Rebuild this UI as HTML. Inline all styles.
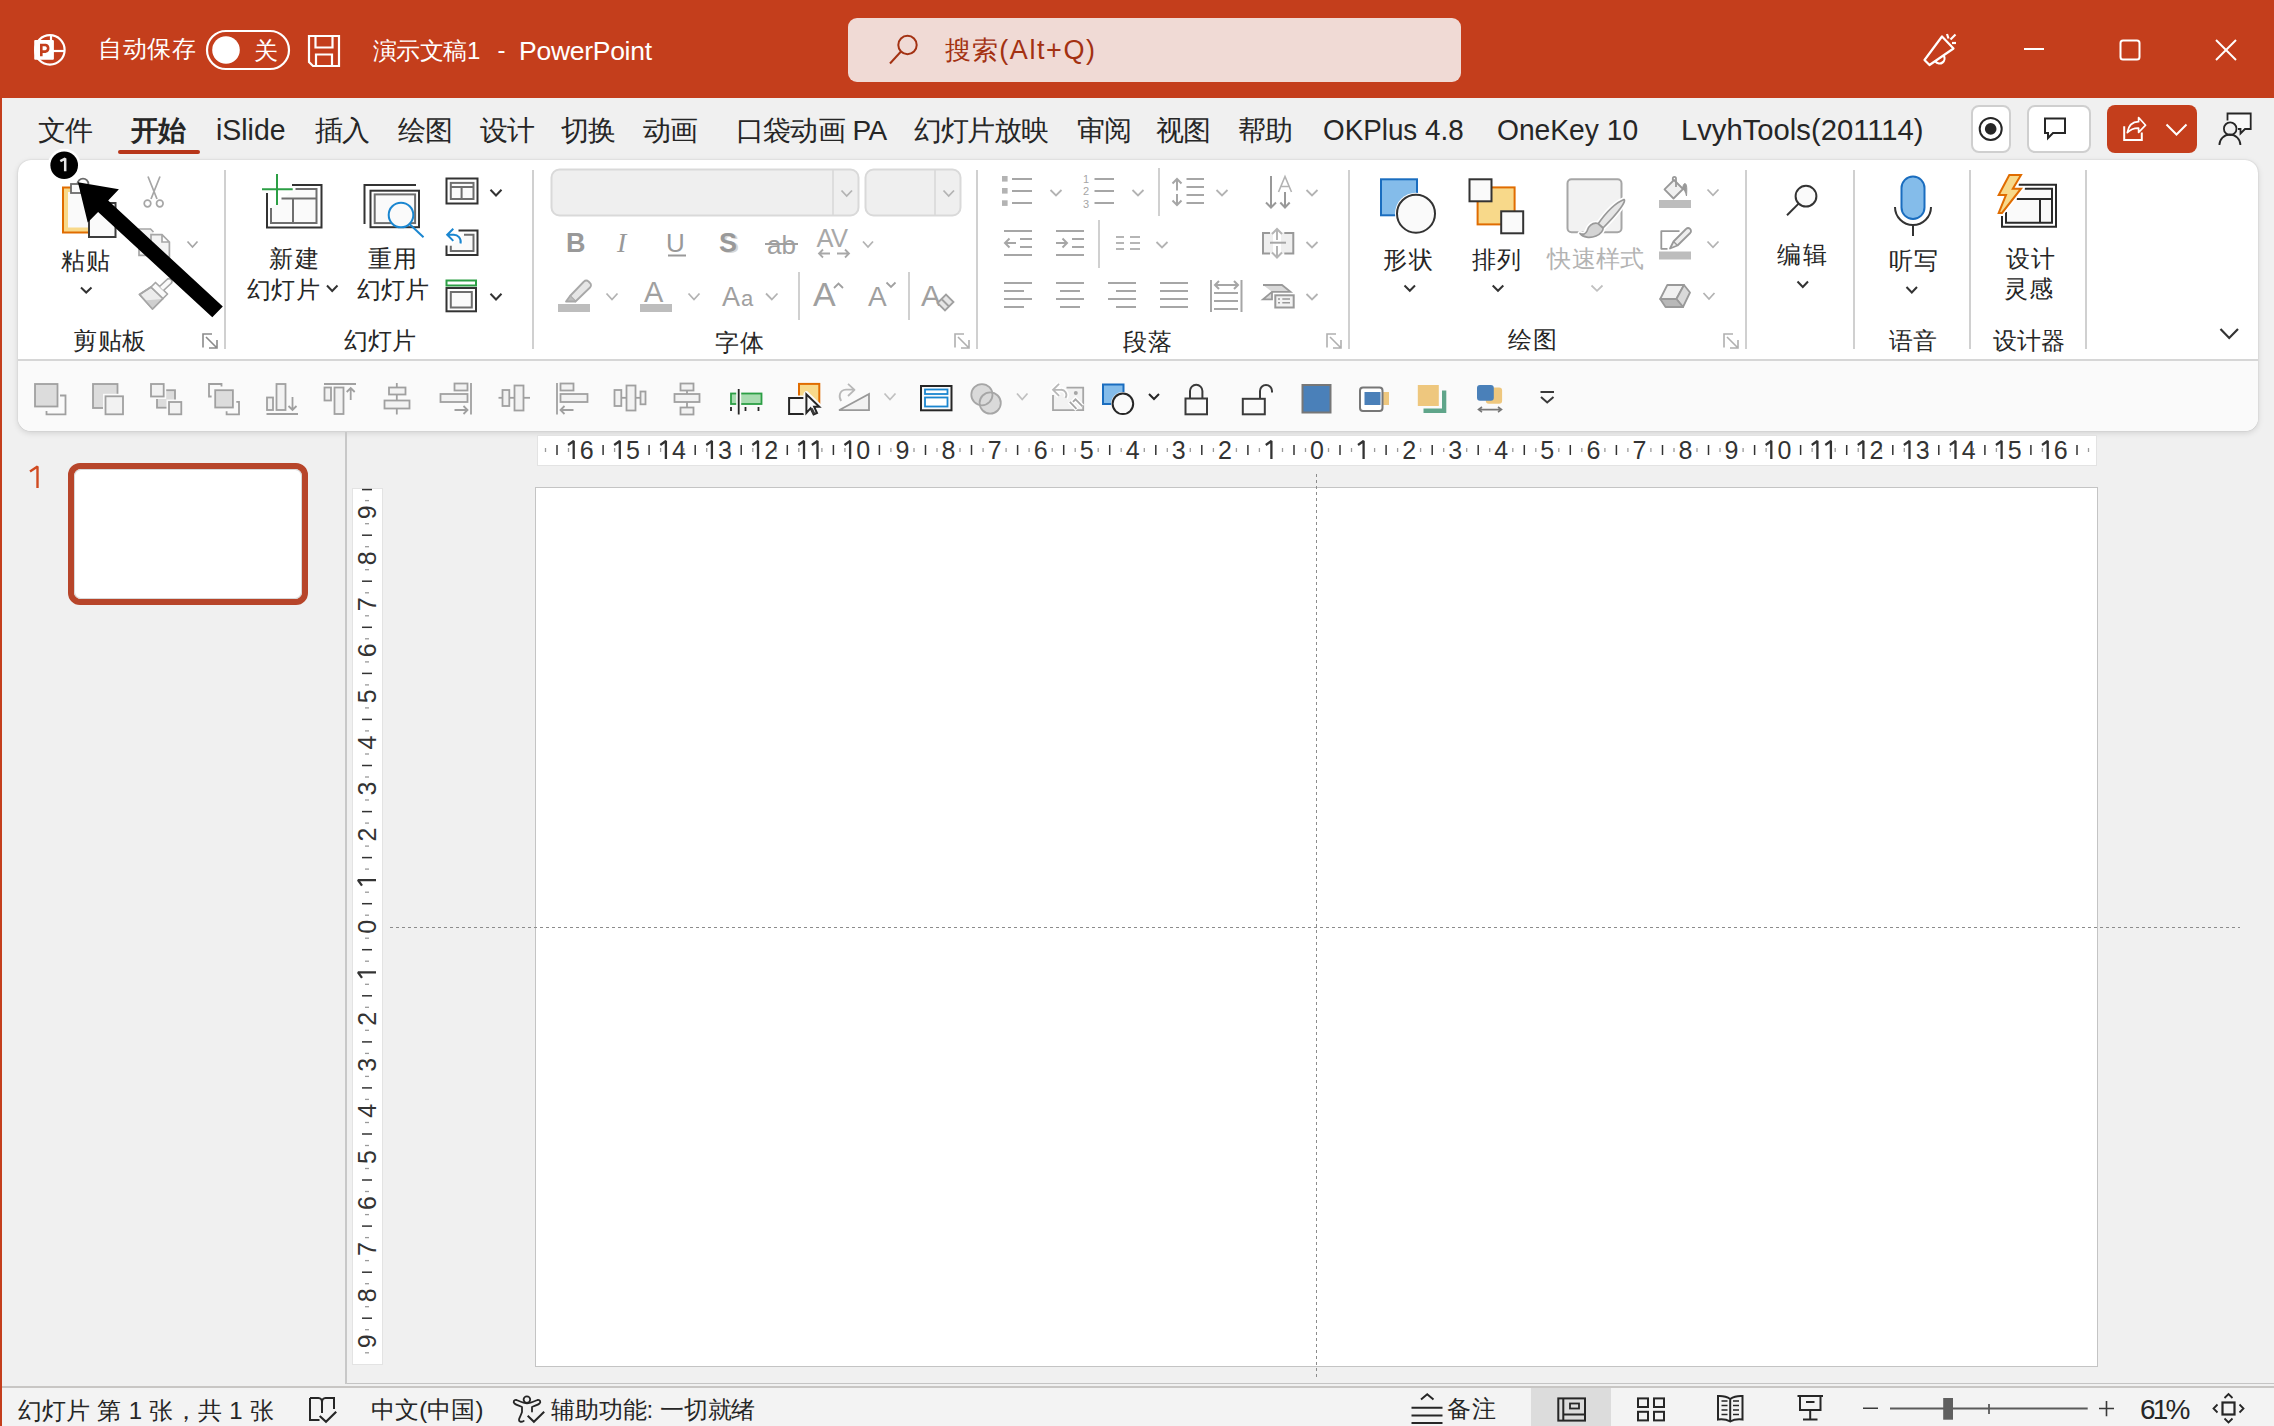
<!DOCTYPE html>
<html><head><meta charset="utf-8">
<style>
*{box-sizing:border-box;margin:0;padding:0}
html,body{width:2274px;height:1426px;overflow:hidden;background:#f0f0f0;font-family:"Liberation Sans",sans-serif;color:#262626}
.a{position:absolute}
svg{position:absolute;overflow:visible}
.t{position:absolute;white-space:nowrap;line-height:1}
#title{left:0;top:0;width:2274px;height:98px;background:#c43e1c}
#lb{left:0;top:98px;width:2px;height:1328px;background:#c43e1c}
#ribbon{left:18px;top:160px;width:2240px;height:270.5px;background:#fff;border-radius:13px;box-shadow:0 2px 6px rgba(0,0,0,.13),0 0 1.5px rgba(0,0,0,.18)}
#tb2{left:18px;top:359px;width:2240px;height:71.5px;background:#fafafa;border-top:2px solid #d6d6d6;border-radius:0 0 13px 13px}
.sep{position:absolute;width:2px;background:#d4d4d4}
.gl{position:absolute;font-size:24px;color:#262626;line-height:1}
.tab{position:absolute;top:117px;font-size:28px;line-height:1;color:#262626;letter-spacing:-1px}
</style></head><body>
<div id="title" class="a"></div>
<div id="lb" class="a"></div>
<!-- TITLE BAR CONTENT -->
<svg style="left:0;top:0" width="2274" height="98">
 <g fill="none" stroke="#fff" stroke-width="2.2">
  <circle cx="49.9" cy="49.9" r="14.7"/>
  <line x1="51" y1="35" x2="51" y2="40"/><line x1="53" y1="51" x2="65" y2="51"/>
 </g>
 <rect x="34.2" y="39.9" width="19.7" height="19.9" rx="1" fill="#fff"/>
 <path d="M41.3 56.2 V45 H45.6 A3.4 3.4 0 0 1 45.6 51.6 H41.3" fill="none" stroke="#c43e1c" stroke-width="2.6"/>
 <rect x="207" y="31" width="82" height="38" rx="19" fill="none" stroke="#fff" stroke-width="2.2"/>
 <circle cx="226" cy="50" r="13.8" fill="#fff"/>
 <g fill="none" stroke="#fff" stroke-width="2.2">
  <path d="M309 36 H339 V66 H313 L309 62 Z"/>
  <path d="M315.5 36 V47.5 H332.5 V36"/>
  <path d="M316 66 V54.5 H332 V66"/>
 </g>
 <rect x="848" y="18" width="613" height="64" rx="9" fill="#f0dad5"/>
 <g fill="none" stroke="#a33112" stroke-width="2">
  <circle cx="907.5" cy="45" r="9.2"/>
  <line x1="901" y1="51.5" x2="890" y2="63.5"/>
 </g>
 <g fill="none" stroke="#fff" stroke-width="2.2" stroke-linejoin="round">
  <path d="M1942 36.5 L1953.5 48.5 L1929.5 65 L1924.5 60 Z"/>
  <path d="M1935.5 61.5 A4.5 4.5 0 1 0 1943.5 55.5"/>
  <line x1="1947" y1="34" x2="1948.5" y2="38.5"/>
  <line x1="1950.5" y1="39.5" x2="1955.5" y2="34.5"/>
  <line x1="1952" y1="43" x2="1956" y2="43"/>
 </g>
 <g fill="none" stroke="#fff" stroke-width="2">
  <line x1="2024" y1="49" x2="2044" y2="49"/>
  <rect x="2120.5" y="40.5" width="19" height="19" rx="2.5"/>
  <line x1="2216" y1="40" x2="2236" y2="60"/><line x1="2236" y1="40" x2="2216" y2="60"/>
 </g>
</svg>



<!-- TABS -->
<div class="tab" id="tab0" style="left:38px;">文件</div>
<div class="tab" id="tab1" style="left:131px;font-weight:bold;">开始</div>
<div class="tab" id="tab2" style="left:216px;font-size:30px;top:115px;letter-spacing:0;transform-origin:0 0;transform:scaleX(0.948);">iSlide</div>
<div class="tab" id="tab3" style="left:315px;">插入</div>
<div class="tab" id="tab4" style="left:397.5px;">绘图</div>
<div class="tab" id="tab5" style="left:479.5px;">设计</div>
<div class="tab" id="tab6" style="left:561.4px;">切换</div>
<div class="tab" id="tab7" style="left:643.2px;">动画</div>
<div class="tab" id="tab8" style="left:735.7px;letter-spacing:-0.6px">口袋动画 PA</div>
<div class="tab" id="tab9" style="left:913.9px;letter-spacing:-1.2px">幻灯片放映</div>
<div class="tab" id="tab10" style="left:1076.5px;">审阅</div>
<div class="tab" id="tab11" style="left:1156.3px;">视图</div>
<div class="tab" id="tab12" style="left:1237.9px;">帮助</div>
<div class="tab" id="tab13" style="left:1322.9px;font-size:30px;top:115px;letter-spacing:0;transform-origin:0 0;transform:scaleX(0.927);">OKPlus 4.8</div>
<div class="tab" id="tab14" style="left:1497.4px;font-size:30px;top:115px;letter-spacing:0;transform-origin:0 0;transform:scaleX(0.94);">OneKey 10</div>
<div class="tab" id="tab15" style="left:1681px;font-size:30px;top:115px;letter-spacing:0;transform-origin:0 0;transform:scaleX(0.974);">LvyhTools(201114)</div>
<div class="a" style="left:118px;top:150px;width:82px;height:4px;border-radius:2px;background:#b7361a"></div>

<!-- TAB RIGHT BUTTONS -->
<svg style="left:0;top:0" width="2274" height="170">
 <rect x="1972" y="106" width="38" height="46" rx="7" fill="#fff" stroke="#cfcfcf" stroke-width="2"/>
 <circle cx="1990.7" cy="128.9" r="11" fill="none" stroke="#262626" stroke-width="2"/>
 <circle cx="1990.7" cy="128.9" r="5.8" fill="#262626"/>
 <rect x="2028" y="106" width="62" height="46" rx="7" fill="#fff" stroke="#cfcfcf" stroke-width="2"/>
 <path d="M2045 118.5 H2065 V133 H2053 L2048 138 V133 H2045 Z" fill="none" stroke="#262626" stroke-width="2" stroke-linejoin="miter"/>
 <rect x="2107" y="105" width="90" height="48" rx="8" fill="#c43e1c"/>
 <g fill="none" stroke="#fff" stroke-width="2">
  <path d="M2124.2 126.2 V140 H2141.8 V132.4"/>
  <path d="M2127.3 132.7 C2128.5 125 2133 121.8 2138.6 121.7 V117.5 L2145.6 125.2 L2138.6 132.4 V128.2 C2133 128 2130 130 2127.3 132.7 Z" stroke-width="1.7" stroke-linejoin="round"/>
  <path d="M2166.5 124.5 L2176.5 134.5 L2186.5 124.5"/>
 </g>
 <g fill="none" stroke="#262626" stroke-width="2">
  <path d="M2227.5 120.5 V113.5 H2250.7 V129 H2245 L2240.5 133.5 V129 H2238" fill="#fafafa" stroke-width="1.8"/>
  <circle cx="2230.2" cy="128.7" r="6.3" fill="#f0f0f0" stroke-width="1.8"/>
  <path d="M2219.4 145 A10.5 10.5 0 0 1 2240.4 145" stroke-width="1.8"/>
 </g>
</svg>
<!-- ribbon -->
<div id="ribbon" class="a"></div>
<div id="tb2" class="a"></div>


<!-- RIBBON CONTENT -->
<svg style="left:0;top:0" width="2274" height="440">
 <!-- separators -->
 <g stroke="#d0d0d0" stroke-width="2">
  <line x1="225" y1="170" x2="225" y2="349"/>
  <line x1="533" y1="170" x2="533" y2="349"/>
  <line x1="977" y1="170" x2="977" y2="349"/>
  <line x1="1349" y1="170" x2="1349" y2="349"/>
  <line x1="1746" y1="170" x2="1746" y2="349"/>
  <line x1="1854" y1="170" x2="1854" y2="349"/>
  <line x1="1970" y1="170" x2="1970" y2="349"/>
  <line x1="2086" y1="170" x2="2086" y2="349"/>
  <line x1="799" y1="272" x2="799" y2="320"/>
  <line x1="909" y1="272" x2="909" y2="320"/>
  <line x1="1159" y1="168" x2="1159" y2="216"/>
  <line x1="1099" y1="220" x2="1099" y2="268"/>
 </g>
 <!-- dialog launchers -->
 <g fill="none" stroke="#8a8a8a" stroke-width="1.6">
  <path d="M203 347.5 V334 H212 M206 337 L217 348 M217 340 V348 H209"/>
  <path d="M955 347.5 V334 H964 M958 337 L969 348 M969 340 V348 H961" stroke="#b0b0b0"/>
  <path d="M1327 347.5 V334 H1336 M1330 337 L1341 348 M1341 340 V348 H1333" stroke="#b0b0b0"/>
  <path d="M1724 347.5 V334 H1733 M1727 337 L1738 348 M1738 340 V348 H1730" stroke="#b0b0b0"/>
 </g>
 <path d="M2220.5 329 L2229.2 338 L2238 329" fill="none" stroke="#333" stroke-width="2.2"/>

 <!-- CLIPBOARD -->
 <rect x="62" y="186.5" width="30" height="47" fill="#e06c00"/>
 <rect x="64" y="188.5" width="26" height="43" fill="#f8d98a"/>
 <rect x="68" y="192" width="22" height="35.5" fill="#fafafa"/>
 <rect x="71" y="184" width="10" height="9" fill="#fafafa" stroke="#6b6b6b" stroke-width="1.8"/>
 <path d="M77.6 184 A5.4 5.4 0 0 1 88.4 184" fill="none" stroke="#6b6b6b" stroke-width="1.8"/>
 <rect x="89" y="203" width="26.5" height="34" fill="#fafafa" stroke="#3c3c3c" stroke-width="2"/>
 <path d="M81 287.5 L86.2 292.5 L91.5 287.5" fill="none" stroke="#333" stroke-width="2"/>
 <g fill="none" stroke="#a6a6a6" stroke-width="1.7">
  <path d="M148 176.5 L157 199 M160 176.5 L151 199"/>
  <circle cx="147.5" cy="203.5" r="3.3"/><circle cx="159.8" cy="203.5" r="3.3"/>
  <path d="M150.5 255.4 H139 V229 H150.5 L153.5 232" fill="#f3f3f3"/>
  <path d="M151 234.6 H162 L169.4 242 V257 H151 Z M162 234.6 V242 H169.4" fill="#f3f3f3"/>
  <path d="M187.5 241.5 L192.5 247 L197.5 241.5"/>
 </g>
 <g fill="#bdbdbd" stroke="#a6a6a6" stroke-width="1.7" stroke-linejoin="round">
  <path d="M139.5 294.5 L151 287 L163 298.5 L152.5 309 Z" fill="#ececec"/><path d="M144.5 300.5 L162 299 L152.5 309 Z" fill="#cfcfcf" stroke="none"/><path d="M139.5 294.5 L151 287 L163 298.5 L152.5 309 Z" fill="none"/>
  <path d="M151 287 L155.5 282.5 L167.5 294 L163 298.5 Z" fill="#fafafa"/><path d="M159.5 286.5 L167 279.5 A2.6 2.6 0 0 1 171 283.5 L163.5 290.5" fill="#fafafa"/>
 </g>

 <!-- SLIDES -->
 <g fill="none" stroke-width="2">
  <path d="M267 193 V227.5 H321.5 V185 H292" stroke="#333"/>
  <path d="M271 208 V223 H316.5 V189 H295.5" stroke="#6e6e6e" fill="#fafafa"/>
  <path d="M281.5 198.5 H316.5 M293 198.5 V223" stroke="#6e6e6e"/>
  <path d="M277 174 V205 M262 189.3 H292.7" stroke="#2c9f45"/>
  <path d="M364.5 224 V185 H416" stroke="#333"/>
  <rect x="370.5" y="190.7" width="48.5" height="36.5" stroke="#333"/>
  <rect x="374.7" y="194.4" width="40.4" height="28.7" stroke="#6e6e6e" fill="#fafafa"/>
  <circle cx="401" cy="215" r="12.3" stroke="#1a86d0" fill="#fafafa"/>
  <path d="M409.5 224 L423.5 237.3" stroke="#1a86d0"/>
  <path d="M327 285.5 L332.2 291 L337.5 285.5" stroke="#333"/>
  <rect x="446.5" y="178.5" width="31" height="25" stroke="#333"/>
  <rect x="450.8" y="182.9" width="22.7" height="16.1" stroke="#6e6e6e" fill="#fafafa"/>
  <path d="M450.8 187 H473.5 M461.6 187 V199" stroke="#6e6e6e"/>
  <path d="M490.5 189.8 L496 195.5 L501.5 189.8" stroke="#333"/>
  <path d="M458.5 230.5 H477.5 V255 H446.5 V245.5" stroke="#333"/>
  <path d="M464 234.7 H473.5 V251 H450.8 V245.7" stroke="#6e6e6e" fill="#fafafa"/>
  <path d="M447.5 234.8 H453 A7 7 0 0 1 460.5 243.5 M453.3 228.7 L447.2 234.8 L453.3 240.9" stroke="#fff" stroke-width="4.5"/><path d="M447.5 234.8 H453 A7 7 0 0 1 460.5 243.5 M453.3 228.7 L447.2 234.8 L453.3 240.9" stroke="#1a86d0" stroke-width="2"/>
  <rect x="446.5" y="280.5" width="29.5" height="5" stroke="#2c9f45"/>
  <rect x="446.5" y="288" width="29.5" height="23.3" stroke="#333"/>
  <rect x="450.8" y="292" width="21" height="15.5" stroke="#6e6e6e" fill="#fafafa"/>
  <path d="M490.5 293.8 L496 299.5 L501.5 293.8" stroke="#333"/>
 </g>

 <!-- FONT -->
 <rect x="551.5" y="169.5" width="307" height="46" rx="8" fill="#efefef" stroke="#d9d9d9" stroke-width="2"/>
 <rect x="865.5" y="169.5" width="95" height="46" rx="8" fill="#efefef" stroke="#d9d9d9" stroke-width="2"/>
 <g stroke="#d9d9d9" stroke-width="1.6"><line x1="833" y1="170" x2="833" y2="215"/><line x1="935" y1="170" x2="935" y2="215"/></g>
 <g fill="none" stroke="#b3b3b3" stroke-width="1.8">
  <path d="M841.5 190.5 L846.7 196 L852 190.5"/><path d="M943.5 190.5 L948.7 196 L954 190.5"/>
  <path d="M863 241.5 L868 247 L873 241.5"/>
  <path d="M606.5 293.5 L612 299.5 L617.5 293.5"/><path d="M688.5 293.5 L694 299.5 L699.5 293.5"/>
  <path d="M766 293.5 L771.8 299.5 L777.5 293.5"/>
 </g>
 <g fill="#999">
  <text x="566" y="252" font-family="Liberation Sans" font-weight="bold" font-size="27">B</text>
  <text x="617" y="252" font-family="Liberation Serif" font-style="italic" font-size="28">I</text>
  <text x="666" y="252" font-family="Liberation Sans" font-size="26">U</text>
  <rect x="668" y="254.5" width="18" height="2"/>
  <text x="721" y="253" font-family="Liberation Sans" font-weight="bold" font-size="27" fill="#d6d6d6">S</text>
  <text x="719" y="251.5" font-family="Liberation Sans" font-weight="bold" font-size="27">S</text>
  <text x="767" y="254" font-family="Liberation Sans" font-size="26" fill="#a0a0a0">ab</text>
  <rect x="765" y="243" width="33" height="2" fill="#a0a0a0"/>
  <text x="816.5" y="246.5" font-family="Liberation Sans" font-size="25.5" fill="#a8a8a8" letter-spacing="-0.5">AV</text>
 </g>
 <g fill="none" stroke="#a8a8a8" stroke-width="1.8">
  <path d="M819 253.5 H830 M823 249.5 L819 253.5 L823 257.5"/>
  <path d="M837 253.5 H849 M845 249.5 L849 253.5 L845 257.5"/>
 </g>
 <rect x="558" y="304" width="32" height="8" fill="#bdbdbd"/>
 <rect x="640" y="304" width="32" height="8" fill="#bdbdbd"/>
 <g fill="#e6e6e6" stroke="#a8a8a8" stroke-width="1.8" stroke-linejoin="round">
  <path d="M570 296 L584 281.5 A3 3 0 0 1 588.5 281.5 L590 283 A3 3 0 0 1 590 287.5 L575.5 301.5 Z"/>
  <path d="M570 296 L566 301.5 L575.5 301.5" fill="#bdbdbd"/>
 </g>
 <g font-family="Liberation Sans" fill="#a0a0a0">
  <text x="644" y="302" font-size="29">A</text>
  <text x="722" y="306" font-size="27">A</text><text x="741" y="306" font-size="22">a</text>
  <text x="813" y="306" font-size="34">A</text>
  <text x="868" y="306" font-size="28">A</text>
  <text x="921" y="306" font-size="30">A</text>
 </g>
 <g fill="none" stroke="#a0a0a0" stroke-width="1.8">
  <path d="M834 288 L838.5 283.5 L843 288"/>
  <path d="M886.5 282.5 L891 287 L895.5 282.5"/>
 </g>
 <path d="M937.5 303 L946 294.5 L953.5 302 L945 310.5 Z M941.5 299 L949.5 307" fill="#e6e6e6" stroke="#a0a0a0" stroke-width="1.8"/>

 <!-- PARAGRAPH -->
 <g fill="#b3b3b3">
  <rect x="1002" y="176" width="5.6" height="5.6"/><rect x="1002" y="188" width="5.6" height="5.6"/><rect x="1002" y="200.3" width="5.6" height="5.6"/>
 </g>
 <g stroke="#a6a6a6" stroke-width="2" fill="none">
  <path d="M1012 179 H1032 M1012 191 H1032 M1012 203 H1032"/>
  <path d="M1094.5 179 H1114 M1094.5 191 H1114 M1094.5 203 H1114"/>
  <path d="M1186.5 179 H1204 M1186.5 187 H1204 M1186.5 195 H1204 M1186.5 203 H1204"/>
  <path d="M1177 179 V190.5 M1177 194 V205 M1172.5 183.5 L1177 179 L1181.5 183.5 M1172.5 200.5 L1177 205 L1181.5 200.5"/>
  <path d="M1271 176 V207 M1266 202.5 L1271 207.5 L1276 202.5" stroke="#999"/>
  <path d="M1285 192 V207 M1280.3 202.5 L1285 207.5 L1289.7 202.5" stroke="#999"/>
  <path d="M1004 231 H1032 M1020 239 H1032 M1020 247 H1032 M1004 255 H1032 M1005.5 243 H1016 M1009.5 238.5 L1005 243 L1009.5 247.5"/>
  <path d="M1056 231 H1084 M1072 239 H1084 M1072 247 H1084 M1056 255 H1084 M1056 243 H1067 M1062.5 238.5 L1067 243 L1062.5 247.5"/>
  <path d="M1004 283 H1032 M1004 291 H1024 M1004 299 H1032 M1004 307 H1024"/>
  <path d="M1056 283 H1084 M1060 291 H1080 M1056 299 H1084 M1060 307 H1080"/>
  <path d="M1108 283 H1136 M1116 291 H1136 M1108 299 H1136 M1116 307 H1136"/>
  <path d="M1160 283 H1188 M1160 291 H1188 M1160 299 H1188 M1160 307 H1188"/>
  <path d="M1211 280 V312 M1241.5 280 V312 M1214 293 H1238 M1214 301 H1238 M1214 309 H1238 M1215 285 H1238 M1219 281 L1215 285 L1219 289 M1234 281 L1238 285 L1234 289"/>
  <path d="M1262.3 232.5 H1293.7 V253.5 H1262.3 Z" fill="#efefef" stroke="none"/><path d="M1273 232 H1281 V254 H1273 Z" fill="#fff" stroke="none"/><path d="M1270 233 H1263 V253.5 H1270 M1284.3 233 H1293.3 V253.5 H1284.3" stroke="#999"/>
  <path d="M1277 229 V240 M1277 246 V257.5 M1272 234 L1277 229 L1282 234 M1272 252.5 L1277 257.5 L1282 252.5" stroke="#b5b5b5"/><path d="M1270 242.7 H1286" stroke="#a6a6a6"/>
 </g>
 <rect x="1116" y="236" width="8" height="2" fill="#b5b5b5"/><rect x="1130" y="236" width="10" height="2" fill="#b5b5b5"/>
 <rect x="1116" y="242" width="8" height="2" fill="#b5b5b5"/><rect x="1130" y="242" width="10" height="2" fill="#b5b5b5"/>
 <rect x="1116" y="248" width="8" height="2" fill="#b5b5b5"/><rect x="1130" y="248" width="10" height="2" fill="#b5b5b5"/>
 <g font-family="Liberation Sans" fill="#a6a6a6" font-size="11">
  <text x="1083" y="183">1</text><text x="1083" y="195">2</text><text x="1083" y="208">3</text>
 </g>
 <path d="M1278.5 192 L1285 176.5 L1291.5 192 M1280.8 186.5 H1289.2" fill="none" stroke="#b3b3b3" stroke-width="1.6"/>
 <path d="M1263 285 H1282 L1290.5 291.8 H1272 L1263 299.3 H1272 V291.8" fill="#d9d9d9" stroke="#999" stroke-width="1.8" stroke-linejoin="miter"/>
 <rect x="1275.3" y="295.3" width="18.4" height="12.2" fill="#f3f3f3" stroke="#999" stroke-width="2"/>
 <path d="M1278 299 H1280 M1282.3 299 H1290 M1278 302.8 H1280 M1282.3 302.8 H1290" stroke="#999" stroke-width="1.6"/>
 <g fill="none" stroke="#b3b3b3" stroke-width="1.8">
  <path d="M1050.5 190 L1056 195.5 L1061.5 190"/><path d="M1132.5 190 L1138 195.5 L1143.5 190"/>
  <path d="M1216.5 190 L1222 195.5 L1227.5 190"/><path d="M1306.5 190 L1312 195.5 L1317.5 190"/>
  <path d="M1156.5 242 L1162 247.5 L1167.5 242"/><path d="M1306.5 242 L1312 247.5 L1317.5 242"/>
  <path d="M1306.5 294 L1312 299.5 L1317.5 294"/>
 </g>

 <!-- DRAWING -->
 <rect x="1381" y="179.3" width="36" height="36" fill="#84bcea" stroke="#1a6dbf" stroke-width="2"/>
 <circle cx="1416" cy="213.7" r="21" fill="#fff"/>
 <circle cx="1416" cy="213.7" r="19" fill="#fafafa" stroke="#333" stroke-width="2"/>
 <path d="M1404.5 285.5 L1409.8 290.8 L1415 285.5" fill="none" stroke="#333" stroke-width="2"/>
 <rect x="1477.6" y="187.4" width="37" height="37" fill="#f8d98a" stroke="#e06c00" stroke-width="2"/>
 <rect x="1469.5" y="179.3" width="22" height="22" fill="#fafafa" stroke="#333" stroke-width="2"/>
 <rect x="1501.2" y="211.3" width="22" height="22" fill="#fafafa" stroke="#333" stroke-width="2"/>
 <path d="M1492.7 285.5 L1498 290.8 L1503.3 285.5" fill="none" stroke="#333" stroke-width="2"/>
 <rect x="1567.5" y="179.3" width="54" height="53" rx="4" fill="#f2f2f2" stroke="#a6a6a6" stroke-width="2"/>
 <g stroke-linejoin="round">
  <path d="M1598 224 C1605 214 1615 203 1624 199.5 C1626.5 201 1619 212 1603 228 Z M1598 223.5 C1592 222 1588 227 1587 231 C1586 234 1583 235 1580 233.5 C1583 237.5 1590 238.5 1596 236 C1601 234 1603.5 230 1603 228 Z" fill="#fff" stroke="#fff" stroke-width="5"/>
  <path d="M1598 224 C1605 214 1615 203 1624 199.5 C1626.5 201 1619 212 1603 228 Z" fill="#e6e6e6" stroke="#999" stroke-width="1.7"/>
  <path d="M1598 223.5 C1592 222 1588 227 1587 231 C1586 234 1583 235 1580 233.5 C1583 237.5 1590 238.5 1596 236 C1601 234 1603.5 230 1603 228 Z" fill="#d4d4d4" stroke="#999" stroke-width="1.7"/>
 </g>

 <path d="M1591.5 285.5 L1597 290.8 L1602.5 285.5" fill="none" stroke="#c0c0c0" stroke-width="1.8"/>
 <g fill="none" stroke="#a6a6a6" stroke-width="1.8" stroke-linejoin="round">
  <path d="M1664.5 189.3 L1674 180 L1683 189 L1673.5 198.5 Z" fill="#f0f0f0" stroke="#999"/>
  <path d="M1676 187 V178.5 A1.6 1.6 0 0 0 1672.8 178.5 V180.5" stroke="#999"/>
  <path d="M1682.5 188.5 C1683 185 1684 183.5 1685 183.5 C1687 184 1687 189 1686.5 196 C1685.5 192 1684.5 190 1682.5 188.5 Z" fill="#999" stroke="#999" stroke-width="1"/>
  <path d="M1679.5 231.2 H1661.3 V248.8 H1667.5" stroke="#999"/><path d="M1670 248.5 L1673.5 241.5 L1686 229 A2.8 2.8 0 0 1 1690.2 233 L1677.5 245.5 Z" fill="#eee" stroke="#999"/><path d="M1673.5 241.5 L1677.5 245.5" stroke="#999" stroke-width="1.4"/>
  <path d="M1660.2 299 L1667.3 285 H1684 L1676.4 299 Z" fill="#f0f0f0" stroke="#999"/><path d="M1684 285 L1690 292.5 L1683 307 L1676.4 299 Z" fill="#d9d9d9" stroke="#999"/>
  <path d="M1660.2 299 H1676.4 L1683 307 H1665.5 Z" fill="#b8b8b8" stroke="#999"/>
 </g>
 <rect x="1659" y="200" width="32" height="8" fill="#bdbdbd"/>
 <rect x="1659" y="251.5" width="32" height="8" fill="#bdbdbd"/>
 <g fill="none" stroke="#b3b3b3" stroke-width="1.8">
  <path d="M1707.5 189.5 L1713 195.3 L1718.5 189.5"/><path d="M1707.5 241.5 L1713 247.3 L1718.5 241.5"/>
  <path d="M1703.5 293 L1709 299 L1714.5 293"/>
 </g>

 <!-- EDIT / VOICE / DESIGNER -->
 <g fill="none" stroke="#333" stroke-width="2">
  <circle cx="1806" cy="196.2" r="10.4" fill="#fafafa"/>
  <path d="M1798.6 203.6 L1787 215.2"/>
  <path d="M1797.5 281.5 L1802.8 287 L1808 281.5"/>
  <rect x="1901.5" y="176.5" width="23" height="42.5" rx="11.5" fill="#84bcea" stroke="#1a6dbf"/>
  <path d="M1895 207 A18 18 0 0 0 1931 207 M1913 225.5 V236"/>
  <path d="M1906.5 287 L1911.8 292.5 L1917 287"/>
  <path d="M2002 216 V226.7 H2056 V184.7 H2018.7" stroke="#2a2a2a"/>
  <path d="M2006 212 V222.7 H2052 V188.7 H2024.8" stroke="#2a2a2a" fill="#fafafa"/>
  <path d="M2016.8 199 H2052 M2040 199 V222.7" stroke="#2a2a2a"/>
 </g>
 <path d="M2009.3 175 H2021 L2012.8 188.7 H2021 L2002 212.9 H1998.7 L2006 195 H1998.7 Z" fill="none" stroke="#fff" stroke-width="5" stroke-linejoin="miter"/>
 <path d="M2009.3 175 H2021 L2012.8 188.7 H2021 L2002 212.9 H1998.7 L2006 195 H1998.7 Z" fill="#f8d98a" stroke="#e06c00" stroke-width="2" stroke-linejoin="miter"/>
</svg>


<!-- QUICK TOOLBAR ROW -->
<svg style="left:0;top:0" width="2274" height="440">
 <g stroke="#a0a0a0" stroke-width="1.8" fill="#f2f2f2">
  <rect x="35" y="384" width="22.5" height="22.5" fill="#dcdcdc"/>
  <path d="M46.5 411 V414.3 H65.5 V395.5 H60" fill="none"/>
  <rect x="93" y="384" width="24.5" height="24" fill="#dcdcdc"/>
  <rect x="105.5" y="396.3" width="17.5" height="18" stroke="#fafafa" stroke-width="5"/>
  <rect x="105.5" y="396.3" width="17.5" height="18"/>
  <rect x="157" y="390.2" width="18" height="17.5" fill="#dcdcdc"/>
  <rect x="151" y="384" width="12.7" height="12.5" stroke="#fafafa" stroke-width="5"/>
  <rect x="169" y="402" width="12.3" height="12.3" stroke="#fafafa" stroke-width="5"/>
  <rect x="151" y="384" width="12.7" height="12.5"/>
  <rect x="169" y="402" width="12.3" height="12.3"/>
  <path d="M211.6 396.5 H209 V384 H221.5 V386.6 M236.3 401.9 H239 V414.3 H226.6 V411.3" fill="none"/>
  <rect x="215.2" y="390.2" width="17.7" height="17.3" fill="#dcdcdc"/>
  <rect x="267" y="397.5" width="6" height="12.5"/><rect x="276.5" y="384" width="9" height="26"/>
  <path d="M266.5 414 H298 M292.5 397 V410 M288.5 406 L292.5 410 L296.5 406" fill="none"/>
  <path d="M324 384 H356 M350.7 400 V388 M346.7 392 L350.7 388 L354.7 392" fill="none"/>
  <rect x="324.5" y="387.5" width="6.5" height="13"/><rect x="334.5" y="387.5" width="9" height="26.5"/>
  <path d="M396.8 383 V414.5" fill="none"/>
  <rect x="389" y="387.5" width="16.5" height="7"/><rect x="384.5" y="400.5" width="25" height="8"/>
  <path d="M471 383 V414.5 M454.5 410 H467.5 M463.5 406 L467.5 410 L463.5 414" fill="none"/>
  <rect x="454.5" y="383.5" width="13" height="7"/><rect x="440.5" y="394" width="27" height="8"/>
  <path d="M498.5 397.8 H530" fill="none"/>
  <rect x="502.5" y="390" width="6.8" height="16"/><rect x="514.5" y="385.5" width="9" height="25"/>
  <path d="M557 383 V414.5 M560.5 410 H573.5 M564.5 406 L560.5 410 L564.5 414" fill="none"/>
  <rect x="560.5" y="383.5" width="13" height="7"/><rect x="560.5" y="394" width="27" height="8"/>
  <path d="M614.5 397.8 H645.5" fill="none"/>
  <rect x="614.5" y="390" width="6.8" height="16"/><rect x="626.5" y="385.5" width="9" height="25"/><rect x="640.5" y="391.5" width="5" height="12.8"/>
  <path d="M687 383 V414.5" fill="none"/>
  <rect x="680.5" y="383.5" width="13" height="7"/><rect x="674.5" y="394" width="25" height="8"/><rect x="680.5" y="407.5" width="13" height="7"/>
 </g>
 <rect x="731" y="393.5" width="30.5" height="10.5" fill="#a8dcb0" stroke="#2c9f45" stroke-width="1.8"/>
 <path d="M738.7 389 V414.5" stroke="#fafafa" stroke-width="5"/>
 <path d="M738.7 389 V414.5 M731 407 V411 M745.5 407 V411 M758.5 407 V411" stroke="#262626" stroke-width="1.8"/>
 <rect x="799" y="383.9" width="20.3" height="20" fill="#f8d98a" stroke="#e06c00" stroke-width="2"/>
 <path d="M803.9 397.9 H789.1 V414.1 H803.9" fill="#fafafa" stroke="#fafafa" stroke-width="5"/>
 <path d="M803.9 397.9 H789.1 V414.1 H803.9" fill="#fafafa" stroke="#262626" stroke-width="2"/>
 <path d="M806.4 394.3 V412.8 L810.6 408.2 L813.6 414.5 L817 413 L814.2 406.8 H819.3 Z" fill="#fafafa" stroke="#fafafa" stroke-width="6" stroke-linejoin="round"/>
 <path d="M806.4 394.3 V412.8 L810.6 408.2 L813.6 414.5 L817 413 L814.2 406.8 H819.3 Z" fill="#fafafa" stroke="#262626" stroke-width="2" stroke-linejoin="miter"/>
 <path d="M811.5 408.5 L814.3 414" stroke="#3a3a3a" stroke-width="2.5"/>
 <g stroke="#a6a6a6" stroke-width="1.8" fill="none">
  <path d="M839 410.2 L869 394 V410.2 Z" fill="#f2f2f2" stroke="#999"/>
  <path d="M841.2 401 C838.5 397 839 390 846 389.6 H854.5 M848 383.8 L854.5 389.8 L848 396" stroke="#b8b8b8" stroke-linejoin="round"/>
  <path d="M884.5 393.5 L890 399.5 L895.5 393.5" stroke="#c0c0c0"/>
  <circle cx="981.9" cy="394.7" r="10.6" fill="#dadada" stroke="none"/>
  <circle cx="990.2" cy="403" r="10.6" fill="#dadada" stroke="none"/>
  <path d="M985 386.5 A10.6 10.6 0 0 1 983.5 410 A10.6 10.6 0 0 1 985 386.5 Z" fill="none" stroke="none"/>
  <circle cx="981.9" cy="394.7" r="10.6" fill="none"/>
  <circle cx="990.2" cy="403" r="10.6" fill="none"/>
  <path d="M1017 393.5 L1022.2 399.5 L1027.5 393.5" stroke="#c0c0c0"/>
  <path d="M1053 395 V410.1 H1083.2 V387.6 H1066.5" fill="#f2f2f2"/>
  <path d="M1069.5 401.5 L1077 409.5 M1073 401.8 L1075.5 399.3 L1082.5 406.3" stroke="#fff" stroke-width="4.5"/>
  <path d="M1069.8 401.8 L1076.5 408.8 M1073 401.8 L1075.5 399.3 L1082.5 406.3"/>
  <circle cx="1075.8" cy="392.9" r="2" fill="#a6a6a6" stroke="none"/>
  <path d="M1059.1 383.9 L1053 389.8 L1059.1 395.9 M1053.5 389.8 H1060.5 A5.3 5.3 0 0 1 1065.5 398" stroke="#fff" stroke-width="5"/>
  <path d="M1059.1 383.9 L1053 389.8 L1059.1 395.9 M1053.5 389.8 H1060.5 A5.3 5.3 0 0 1 1065.5 398" stroke="#b8b8b8"/>
 </g>
 <rect x="921" y="386" width="30.5" height="24.3" fill="#fafafa" stroke="#262626" stroke-width="2"/>
 <rect x="925" y="389.5" width="22.5" height="4.5" fill="#fff" stroke="#1a86d0" stroke-width="1.8"/>
 <rect x="925" y="397.5" width="22.5" height="9" fill="#fff" stroke="#1a86d0" stroke-width="1.8"/>
 <rect x="1103" y="384.5" width="20.5" height="19.5" fill="#84bcea" stroke="#1a6dbf" stroke-width="2"/>
 <circle cx="1122.9" cy="403.8" r="11.8" fill="#fafafa"/>
 <circle cx="1122.9" cy="403.8" r="10.3" fill="#fafafa" stroke="#262626" stroke-width="2"/>
 <path d="M1149 394 L1154 399 L1159 394" fill="none" stroke="#262626" stroke-width="2"/>
 <g fill="none" stroke="#3a3a3a" stroke-width="2">
  <rect x="1185.5" y="398.5" width="21.5" height="15.8"/>
  <path d="M1190 398.5 V391 A6.2 6.2 0 0 1 1202.4 391 V398.5"/>
  <rect x="1242.8" y="398.8" width="22" height="15.5"/>
  <path d="M1260 398.8 V391 A6 6 0 0 1 1272 391 V392.5"/>
  <path d="M1540.5 392 H1554 M1541 397 L1547.2 402.5 L1553.5 397"/>
 </g>
 <rect x="1302.5" y="385" width="28" height="27.5" fill="#4a80b9" stroke="#777" stroke-width="2"/>
 <rect x="1380" y="392" width="9" height="13" fill="#eec77e"/>
 <rect x="1360" y="387.5" width="22.5" height="23.5" rx="3" fill="#fff" stroke="#777" stroke-width="2"/>
 <rect x="1364.5" y="392" width="16" height="13" fill="#4a80b9"/>
 <path d="M1423.5 413 V408.5 H1442 V390.5 H1446.3 V413 Z" fill="#5fa58a"/>
 <rect x="1417.8" y="385" width="21" height="21" fill="#eec77e"/>
 <rect x="1485.8" y="387.5" width="16.3" height="16.3" rx="3" fill="#eec77e"/>
 <rect x="1477" y="385" width="16.8" height="15.8" rx="3" fill="#4a80b9"/>
 <path d="M1479 409.6 H1501 M1482 407 L1478.5 409.6 L1482 412.2 M1498 407 L1501.5 409.6 L1498 412.2" fill="none" stroke="#777" stroke-width="1.6"/>
</svg>

<!-- left pane border -->
<div class="a" style="left:345px;top:432px;width:1.5px;height:951.5px;background:#c8c8c8"></div>

<!-- horizontal ruler -->
<div class="a" style="left:537px;top:435px;width:1560px;height:31px;background:#fff;border:1px solid #e3e3e3"></div>
<!-- vertical ruler -->
<div class="a" style="left:352px;top:488px;width:31px;height:877px;background:#fff;border:1px solid #e3e3e3"></div>

<!-- RULERS -->
<svg style="left:0;top:0" width="2274" height="1426">
<g>
<line x1="557.0" y1="445" x2="557.0" y2="455" stroke="#333" stroke-width="1.5"/>
<line x1="603.1" y1="445" x2="603.1" y2="455" stroke="#333" stroke-width="1.5"/>
<line x1="649.1" y1="445" x2="649.1" y2="455" stroke="#333" stroke-width="1.5"/>
<line x1="695.2" y1="445" x2="695.2" y2="455" stroke="#333" stroke-width="1.5"/>
<line x1="741.2" y1="445" x2="741.2" y2="455" stroke="#333" stroke-width="1.5"/>
<line x1="787.3" y1="445" x2="787.3" y2="455" stroke="#333" stroke-width="1.5"/>
<line x1="833.4" y1="445" x2="833.4" y2="455" stroke="#333" stroke-width="1.5"/>
<line x1="879.4" y1="445" x2="879.4" y2="455" stroke="#333" stroke-width="1.5"/>
<line x1="925.5" y1="445" x2="925.5" y2="455" stroke="#333" stroke-width="1.5"/>
<line x1="971.5" y1="445" x2="971.5" y2="455" stroke="#333" stroke-width="1.5"/>
<line x1="1017.6" y1="445" x2="1017.6" y2="455" stroke="#333" stroke-width="1.5"/>
<line x1="1063.7" y1="445" x2="1063.7" y2="455" stroke="#333" stroke-width="1.5"/>
<line x1="1109.7" y1="445" x2="1109.7" y2="455" stroke="#333" stroke-width="1.5"/>
<line x1="1155.8" y1="445" x2="1155.8" y2="455" stroke="#333" stroke-width="1.5"/>
<line x1="1201.8" y1="445" x2="1201.8" y2="455" stroke="#333" stroke-width="1.5"/>
<line x1="1247.9" y1="445" x2="1247.9" y2="455" stroke="#333" stroke-width="1.5"/>
<line x1="1294.0" y1="445" x2="1294.0" y2="455" stroke="#333" stroke-width="1.5"/>
<line x1="1340.0" y1="445" x2="1340.0" y2="455" stroke="#333" stroke-width="1.5"/>
<line x1="1386.1" y1="445" x2="1386.1" y2="455" stroke="#333" stroke-width="1.5"/>
<line x1="1432.2" y1="445" x2="1432.2" y2="455" stroke="#333" stroke-width="1.5"/>
<line x1="1478.2" y1="445" x2="1478.2" y2="455" stroke="#333" stroke-width="1.5"/>
<line x1="1524.3" y1="445" x2="1524.3" y2="455" stroke="#333" stroke-width="1.5"/>
<line x1="1570.3" y1="445" x2="1570.3" y2="455" stroke="#333" stroke-width="1.5"/>
<line x1="1616.4" y1="445" x2="1616.4" y2="455" stroke="#333" stroke-width="1.5"/>
<line x1="1662.5" y1="445" x2="1662.5" y2="455" stroke="#333" stroke-width="1.5"/>
<line x1="1708.5" y1="445" x2="1708.5" y2="455" stroke="#333" stroke-width="1.5"/>
<line x1="1754.6" y1="445" x2="1754.6" y2="455" stroke="#333" stroke-width="1.5"/>
<line x1="1800.6" y1="445" x2="1800.6" y2="455" stroke="#333" stroke-width="1.5"/>
<line x1="1846.7" y1="445" x2="1846.7" y2="455" stroke="#333" stroke-width="1.5"/>
<line x1="1892.8" y1="445" x2="1892.8" y2="455" stroke="#333" stroke-width="1.5"/>
<line x1="1938.8" y1="445" x2="1938.8" y2="455" stroke="#333" stroke-width="1.5"/>
<line x1="1984.9" y1="445" x2="1984.9" y2="455" stroke="#333" stroke-width="1.5"/>
<line x1="2030.9" y1="445" x2="2030.9" y2="455" stroke="#333" stroke-width="1.5"/>
<line x1="2077.0" y1="445" x2="2077.0" y2="455" stroke="#333" stroke-width="1.5"/>
<line x1="545.5" y1="448" x2="545.5" y2="452" stroke="#9a9a9a" stroke-width="1.3"/>
<line x1="568.5" y1="448" x2="568.5" y2="452" stroke="#9a9a9a" stroke-width="1.3"/>
<line x1="591.6" y1="448" x2="591.6" y2="452" stroke="#9a9a9a" stroke-width="1.3"/>
<line x1="614.6" y1="448" x2="614.6" y2="452" stroke="#9a9a9a" stroke-width="1.3"/>
<line x1="637.6" y1="448" x2="637.6" y2="452" stroke="#9a9a9a" stroke-width="1.3"/>
<line x1="660.6" y1="448" x2="660.6" y2="452" stroke="#9a9a9a" stroke-width="1.3"/>
<line x1="683.7" y1="448" x2="683.7" y2="452" stroke="#9a9a9a" stroke-width="1.3"/>
<line x1="706.7" y1="448" x2="706.7" y2="452" stroke="#9a9a9a" stroke-width="1.3"/>
<line x1="729.7" y1="448" x2="729.7" y2="452" stroke="#9a9a9a" stroke-width="1.3"/>
<line x1="752.8" y1="448" x2="752.8" y2="452" stroke="#9a9a9a" stroke-width="1.3"/>
<line x1="775.8" y1="448" x2="775.8" y2="452" stroke="#9a9a9a" stroke-width="1.3"/>
<line x1="798.8" y1="448" x2="798.8" y2="452" stroke="#9a9a9a" stroke-width="1.3"/>
<line x1="821.9" y1="448" x2="821.9" y2="452" stroke="#9a9a9a" stroke-width="1.3"/>
<line x1="844.9" y1="448" x2="844.9" y2="452" stroke="#9a9a9a" stroke-width="1.3"/>
<line x1="867.9" y1="448" x2="867.9" y2="452" stroke="#9a9a9a" stroke-width="1.3"/>
<line x1="890.9" y1="448" x2="890.9" y2="452" stroke="#9a9a9a" stroke-width="1.3"/>
<line x1="914.0" y1="448" x2="914.0" y2="452" stroke="#9a9a9a" stroke-width="1.3"/>
<line x1="937.0" y1="448" x2="937.0" y2="452" stroke="#9a9a9a" stroke-width="1.3"/>
<line x1="960.0" y1="448" x2="960.0" y2="452" stroke="#9a9a9a" stroke-width="1.3"/>
<line x1="983.1" y1="448" x2="983.1" y2="452" stroke="#9a9a9a" stroke-width="1.3"/>
<line x1="1006.1" y1="448" x2="1006.1" y2="452" stroke="#9a9a9a" stroke-width="1.3"/>
<line x1="1029.1" y1="448" x2="1029.1" y2="452" stroke="#9a9a9a" stroke-width="1.3"/>
<line x1="1052.2" y1="448" x2="1052.2" y2="452" stroke="#9a9a9a" stroke-width="1.3"/>
<line x1="1075.2" y1="448" x2="1075.2" y2="452" stroke="#9a9a9a" stroke-width="1.3"/>
<line x1="1098.2" y1="448" x2="1098.2" y2="452" stroke="#9a9a9a" stroke-width="1.3"/>
<line x1="1121.2" y1="448" x2="1121.2" y2="452" stroke="#9a9a9a" stroke-width="1.3"/>
<line x1="1144.3" y1="448" x2="1144.3" y2="452" stroke="#9a9a9a" stroke-width="1.3"/>
<line x1="1167.3" y1="448" x2="1167.3" y2="452" stroke="#9a9a9a" stroke-width="1.3"/>
<line x1="1190.3" y1="448" x2="1190.3" y2="452" stroke="#9a9a9a" stroke-width="1.3"/>
<line x1="1213.4" y1="448" x2="1213.4" y2="452" stroke="#9a9a9a" stroke-width="1.3"/>
<line x1="1236.4" y1="448" x2="1236.4" y2="452" stroke="#9a9a9a" stroke-width="1.3"/>
<line x1="1259.4" y1="448" x2="1259.4" y2="452" stroke="#9a9a9a" stroke-width="1.3"/>
<line x1="1282.5" y1="448" x2="1282.5" y2="452" stroke="#9a9a9a" stroke-width="1.3"/>
<line x1="1305.5" y1="448" x2="1305.5" y2="452" stroke="#9a9a9a" stroke-width="1.3"/>
<line x1="1328.5" y1="448" x2="1328.5" y2="452" stroke="#9a9a9a" stroke-width="1.3"/>
<line x1="1351.5" y1="448" x2="1351.5" y2="452" stroke="#9a9a9a" stroke-width="1.3"/>
<line x1="1374.6" y1="448" x2="1374.6" y2="452" stroke="#9a9a9a" stroke-width="1.3"/>
<line x1="1397.6" y1="448" x2="1397.6" y2="452" stroke="#9a9a9a" stroke-width="1.3"/>
<line x1="1420.6" y1="448" x2="1420.6" y2="452" stroke="#9a9a9a" stroke-width="1.3"/>
<line x1="1443.7" y1="448" x2="1443.7" y2="452" stroke="#9a9a9a" stroke-width="1.3"/>
<line x1="1466.7" y1="448" x2="1466.7" y2="452" stroke="#9a9a9a" stroke-width="1.3"/>
<line x1="1489.7" y1="448" x2="1489.7" y2="452" stroke="#9a9a9a" stroke-width="1.3"/>
<line x1="1512.8" y1="448" x2="1512.8" y2="452" stroke="#9a9a9a" stroke-width="1.3"/>
<line x1="1535.8" y1="448" x2="1535.8" y2="452" stroke="#9a9a9a" stroke-width="1.3"/>
<line x1="1558.8" y1="448" x2="1558.8" y2="452" stroke="#9a9a9a" stroke-width="1.3"/>
<line x1="1581.8" y1="448" x2="1581.8" y2="452" stroke="#9a9a9a" stroke-width="1.3"/>
<line x1="1604.9" y1="448" x2="1604.9" y2="452" stroke="#9a9a9a" stroke-width="1.3"/>
<line x1="1627.9" y1="448" x2="1627.9" y2="452" stroke="#9a9a9a" stroke-width="1.3"/>
<line x1="1650.9" y1="448" x2="1650.9" y2="452" stroke="#9a9a9a" stroke-width="1.3"/>
<line x1="1674.0" y1="448" x2="1674.0" y2="452" stroke="#9a9a9a" stroke-width="1.3"/>
<line x1="1697.0" y1="448" x2="1697.0" y2="452" stroke="#9a9a9a" stroke-width="1.3"/>
<line x1="1720.0" y1="448" x2="1720.0" y2="452" stroke="#9a9a9a" stroke-width="1.3"/>
<line x1="1743.1" y1="448" x2="1743.1" y2="452" stroke="#9a9a9a" stroke-width="1.3"/>
<line x1="1766.1" y1="448" x2="1766.1" y2="452" stroke="#9a9a9a" stroke-width="1.3"/>
<line x1="1789.1" y1="448" x2="1789.1" y2="452" stroke="#9a9a9a" stroke-width="1.3"/>
<line x1="1812.1" y1="448" x2="1812.1" y2="452" stroke="#9a9a9a" stroke-width="1.3"/>
<line x1="1835.2" y1="448" x2="1835.2" y2="452" stroke="#9a9a9a" stroke-width="1.3"/>
<line x1="1858.2" y1="448" x2="1858.2" y2="452" stroke="#9a9a9a" stroke-width="1.3"/>
<line x1="1881.2" y1="448" x2="1881.2" y2="452" stroke="#9a9a9a" stroke-width="1.3"/>
<line x1="1904.3" y1="448" x2="1904.3" y2="452" stroke="#9a9a9a" stroke-width="1.3"/>
<line x1="1927.3" y1="448" x2="1927.3" y2="452" stroke="#9a9a9a" stroke-width="1.3"/>
<line x1="1950.3" y1="448" x2="1950.3" y2="452" stroke="#9a9a9a" stroke-width="1.3"/>
<line x1="1973.4" y1="448" x2="1973.4" y2="452" stroke="#9a9a9a" stroke-width="1.3"/>
<line x1="1996.4" y1="448" x2="1996.4" y2="452" stroke="#9a9a9a" stroke-width="1.3"/>
<line x1="2019.4" y1="448" x2="2019.4" y2="452" stroke="#9a9a9a" stroke-width="1.3"/>
<line x1="2042.4" y1="448" x2="2042.4" y2="452" stroke="#9a9a9a" stroke-width="1.3"/>
<line x1="2065.5" y1="448" x2="2065.5" y2="452" stroke="#9a9a9a" stroke-width="1.3"/>
<line x1="2088.5" y1="448" x2="2088.5" y2="452" stroke="#9a9a9a" stroke-width="1.3"/>
<line x1="362" y1="535.2" x2="372" y2="535.2" stroke="#333" stroke-width="1.5"/>
<line x1="362" y1="581.2" x2="372" y2="581.2" stroke="#333" stroke-width="1.5"/>
<line x1="362" y1="627.3" x2="372" y2="627.3" stroke="#333" stroke-width="1.5"/>
<line x1="362" y1="673.4" x2="372" y2="673.4" stroke="#333" stroke-width="1.5"/>
<line x1="362" y1="719.4" x2="372" y2="719.4" stroke="#333" stroke-width="1.5"/>
<line x1="362" y1="765.5" x2="372" y2="765.5" stroke="#333" stroke-width="1.5"/>
<line x1="362" y1="811.6" x2="372" y2="811.6" stroke="#333" stroke-width="1.5"/>
<line x1="362" y1="857.6" x2="372" y2="857.6" stroke="#333" stroke-width="1.5"/>
<line x1="362" y1="903.7" x2="372" y2="903.7" stroke="#333" stroke-width="1.5"/>
<line x1="362" y1="949.7" x2="372" y2="949.7" stroke="#333" stroke-width="1.5"/>
<line x1="362" y1="995.8" x2="372" y2="995.8" stroke="#333" stroke-width="1.5"/>
<line x1="362" y1="1041.9" x2="372" y2="1041.9" stroke="#333" stroke-width="1.5"/>
<line x1="362" y1="1087.9" x2="372" y2="1087.9" stroke="#333" stroke-width="1.5"/>
<line x1="362" y1="1134.0" x2="372" y2="1134.0" stroke="#333" stroke-width="1.5"/>
<line x1="362" y1="1180.0" x2="372" y2="1180.0" stroke="#333" stroke-width="1.5"/>
<line x1="362" y1="1226.1" x2="372" y2="1226.1" stroke="#333" stroke-width="1.5"/>
<line x1="362" y1="1272.2" x2="372" y2="1272.2" stroke="#333" stroke-width="1.5"/>
<line x1="362" y1="1318.2" x2="372" y2="1318.2" stroke="#333" stroke-width="1.5"/>
<line x1="365" y1="500.6" x2="369" y2="500.6" stroke="#9a9a9a" stroke-width="1.3"/>
<line x1="365" y1="523.7" x2="369" y2="523.7" stroke="#9a9a9a" stroke-width="1.3"/>
<line x1="365" y1="546.7" x2="369" y2="546.7" stroke="#9a9a9a" stroke-width="1.3"/>
<line x1="365" y1="569.7" x2="369" y2="569.7" stroke="#9a9a9a" stroke-width="1.3"/>
<line x1="365" y1="592.8" x2="369" y2="592.8" stroke="#9a9a9a" stroke-width="1.3"/>
<line x1="365" y1="615.8" x2="369" y2="615.8" stroke="#9a9a9a" stroke-width="1.3"/>
<line x1="365" y1="638.8" x2="369" y2="638.8" stroke="#9a9a9a" stroke-width="1.3"/>
<line x1="365" y1="661.9" x2="369" y2="661.9" stroke="#9a9a9a" stroke-width="1.3"/>
<line x1="365" y1="684.9" x2="369" y2="684.9" stroke="#9a9a9a" stroke-width="1.3"/>
<line x1="365" y1="707.9" x2="369" y2="707.9" stroke="#9a9a9a" stroke-width="1.3"/>
<line x1="365" y1="730.9" x2="369" y2="730.9" stroke="#9a9a9a" stroke-width="1.3"/>
<line x1="365" y1="754.0" x2="369" y2="754.0" stroke="#9a9a9a" stroke-width="1.3"/>
<line x1="365" y1="777.0" x2="369" y2="777.0" stroke="#9a9a9a" stroke-width="1.3"/>
<line x1="365" y1="800.0" x2="369" y2="800.0" stroke="#9a9a9a" stroke-width="1.3"/>
<line x1="365" y1="823.1" x2="369" y2="823.1" stroke="#9a9a9a" stroke-width="1.3"/>
<line x1="365" y1="846.1" x2="369" y2="846.1" stroke="#9a9a9a" stroke-width="1.3"/>
<line x1="365" y1="869.1" x2="369" y2="869.1" stroke="#9a9a9a" stroke-width="1.3"/>
<line x1="365" y1="892.2" x2="369" y2="892.2" stroke="#9a9a9a" stroke-width="1.3"/>
<line x1="365" y1="915.2" x2="369" y2="915.2" stroke="#9a9a9a" stroke-width="1.3"/>
<line x1="365" y1="938.2" x2="369" y2="938.2" stroke="#9a9a9a" stroke-width="1.3"/>
<line x1="365" y1="961.2" x2="369" y2="961.2" stroke="#9a9a9a" stroke-width="1.3"/>
<line x1="365" y1="984.3" x2="369" y2="984.3" stroke="#9a9a9a" stroke-width="1.3"/>
<line x1="365" y1="1007.3" x2="369" y2="1007.3" stroke="#9a9a9a" stroke-width="1.3"/>
<line x1="365" y1="1030.3" x2="369" y2="1030.3" stroke="#9a9a9a" stroke-width="1.3"/>
<line x1="365" y1="1053.4" x2="369" y2="1053.4" stroke="#9a9a9a" stroke-width="1.3"/>
<line x1="365" y1="1076.4" x2="369" y2="1076.4" stroke="#9a9a9a" stroke-width="1.3"/>
<line x1="365" y1="1099.4" x2="369" y2="1099.4" stroke="#9a9a9a" stroke-width="1.3"/>
<line x1="365" y1="1122.5" x2="369" y2="1122.5" stroke="#9a9a9a" stroke-width="1.3"/>
<line x1="365" y1="1145.5" x2="369" y2="1145.5" stroke="#9a9a9a" stroke-width="1.3"/>
<line x1="365" y1="1168.5" x2="369" y2="1168.5" stroke="#9a9a9a" stroke-width="1.3"/>
<line x1="365" y1="1191.5" x2="369" y2="1191.5" stroke="#9a9a9a" stroke-width="1.3"/>
<line x1="365" y1="1214.6" x2="369" y2="1214.6" stroke="#9a9a9a" stroke-width="1.3"/>
<line x1="365" y1="1237.6" x2="369" y2="1237.6" stroke="#9a9a9a" stroke-width="1.3"/>
<line x1="365" y1="1260.6" x2="369" y2="1260.6" stroke="#9a9a9a" stroke-width="1.3"/>
<line x1="365" y1="1283.7" x2="369" y2="1283.7" stroke="#9a9a9a" stroke-width="1.3"/>
<line x1="365" y1="1306.7" x2="369" y2="1306.7" stroke="#9a9a9a" stroke-width="1.3"/>
<line x1="365" y1="1329.7" x2="369" y2="1329.7" stroke="#9a9a9a" stroke-width="1.3"/>
<line x1="365" y1="1352.8" x2="369" y2="1352.8" stroke="#9a9a9a" stroke-width="1.3"/>
</g>
<g font-family="Liberation Sans" font-size="25" fill="#333" text-anchor="middle">
<g transform="translate(580.0 459)"><path d="M-11.9 -14 L-6.3 -18 V0" fill="none" stroke="#333" stroke-width="2.3" stroke-linejoin="bevel"/><text x="6.8" y="0">6</text></g>
<g transform="translate(626.1 459)"><path d="M-11.9 -14 L-6.3 -18 V0" fill="none" stroke="#333" stroke-width="2.3" stroke-linejoin="bevel"/><text x="6.8" y="0">5</text></g>
<g transform="translate(672.2 459)"><path d="M-11.9 -14 L-6.3 -18 V0" fill="none" stroke="#333" stroke-width="2.3" stroke-linejoin="bevel"/><text x="6.8" y="0">4</text></g>
<g transform="translate(718.2 459)"><path d="M-11.9 -14 L-6.3 -18 V0" fill="none" stroke="#333" stroke-width="2.3" stroke-linejoin="bevel"/><text x="6.8" y="0">3</text></g>
<g transform="translate(764.3 459)"><path d="M-11.9 -14 L-6.3 -18 V0" fill="none" stroke="#333" stroke-width="2.3" stroke-linejoin="bevel"/><text x="6.8" y="0">2</text></g>
<g transform="translate(810.3 459)"><path d="M-11.9 -14 L-6.3 -18 V0" fill="none" stroke="#333" stroke-width="2.3" stroke-linejoin="bevel"/><path d="M1.6 -14 L7.2 -18 V0" fill="none" stroke="#333" stroke-width="2.3" stroke-linejoin="bevel"/></g>
<g transform="translate(856.4 459)"><path d="M-11.9 -14 L-6.3 -18 V0" fill="none" stroke="#333" stroke-width="2.3" stroke-linejoin="bevel"/><text x="6.8" y="0">0</text></g>
<g transform="translate(902.5 459)"><text x="0.0" y="0">9</text></g>
<g transform="translate(948.5 459)"><text x="0.0" y="0">8</text></g>
<g transform="translate(994.6 459)"><text x="0.0" y="0">7</text></g>
<g transform="translate(1040.6 459)"><text x="0.0" y="0">6</text></g>
<g transform="translate(1086.7 459)"><text x="0.0" y="0">5</text></g>
<g transform="translate(1132.8 459)"><text x="0.0" y="0">4</text></g>
<g transform="translate(1178.8 459)"><text x="0.0" y="0">3</text></g>
<g transform="translate(1224.9 459)"><text x="0.0" y="0">2</text></g>
<g transform="translate(1270.9 459)"><path d="M-5.1 -14 L0.5 -18 V0" fill="none" stroke="#333" stroke-width="2.3" stroke-linejoin="bevel"/></g>
<g transform="translate(1317.0 459)"><text x="0.0" y="0">0</text></g>
<g transform="translate(1363.1 459)"><path d="M-5.1 -14 L0.5 -18 V0" fill="none" stroke="#333" stroke-width="2.3" stroke-linejoin="bevel"/></g>
<g transform="translate(1409.1 459)"><text x="0.0" y="0">2</text></g>
<g transform="translate(1455.2 459)"><text x="0.0" y="0">3</text></g>
<g transform="translate(1501.2 459)"><text x="0.0" y="0">4</text></g>
<g transform="translate(1547.3 459)"><text x="0.0" y="0">5</text></g>
<g transform="translate(1593.4 459)"><text x="0.0" y="0">6</text></g>
<g transform="translate(1639.4 459)"><text x="0.0" y="0">7</text></g>
<g transform="translate(1685.5 459)"><text x="0.0" y="0">8</text></g>
<g transform="translate(1731.5 459)"><text x="0.0" y="0">9</text></g>
<g transform="translate(1777.6 459)"><path d="M-11.9 -14 L-6.3 -18 V0" fill="none" stroke="#333" stroke-width="2.3" stroke-linejoin="bevel"/><text x="6.8" y="0">0</text></g>
<g transform="translate(1823.7 459)"><path d="M-11.9 -14 L-6.3 -18 V0" fill="none" stroke="#333" stroke-width="2.3" stroke-linejoin="bevel"/><path d="M1.6 -14 L7.2 -18 V0" fill="none" stroke="#333" stroke-width="2.3" stroke-linejoin="bevel"/></g>
<g transform="translate(1869.7 459)"><path d="M-11.9 -14 L-6.3 -18 V0" fill="none" stroke="#333" stroke-width="2.3" stroke-linejoin="bevel"/><text x="6.8" y="0">2</text></g>
<g transform="translate(1915.8 459)"><path d="M-11.9 -14 L-6.3 -18 V0" fill="none" stroke="#333" stroke-width="2.3" stroke-linejoin="bevel"/><text x="6.8" y="0">3</text></g>
<g transform="translate(1961.8 459)"><path d="M-11.9 -14 L-6.3 -18 V0" fill="none" stroke="#333" stroke-width="2.3" stroke-linejoin="bevel"/><text x="6.8" y="0">4</text></g>
<g transform="translate(2007.9 459)"><path d="M-11.9 -14 L-6.3 -18 V0" fill="none" stroke="#333" stroke-width="2.3" stroke-linejoin="bevel"/><text x="6.8" y="0">5</text></g>
<g transform="translate(2054.0 459)"><path d="M-11.9 -14 L-6.3 -18 V0" fill="none" stroke="#333" stroke-width="2.3" stroke-linejoin="bevel"/><text x="6.8" y="0">6</text></g>
<g transform="translate(376 512.2) rotate(-90)"><text x="0.0" y="0">9</text></g>
<g transform="translate(376 558.2) rotate(-90)"><text x="0.0" y="0">8</text></g>
<g transform="translate(376 604.3) rotate(-90)"><text x="0.0" y="0">7</text></g>
<g transform="translate(376 650.3) rotate(-90)"><text x="0.0" y="0">6</text></g>
<g transform="translate(376 696.4) rotate(-90)"><text x="0.0" y="0">5</text></g>
<g transform="translate(376 742.5) rotate(-90)"><text x="0.0" y="0">4</text></g>
<g transform="translate(376 788.5) rotate(-90)"><text x="0.0" y="0">3</text></g>
<g transform="translate(376 834.6) rotate(-90)"><text x="0.0" y="0">2</text></g>
<g transform="translate(376 880.6) rotate(-90)"><path d="M-5.1 -14 L0.5 -18 V0" fill="none" stroke="#333" stroke-width="2.3" stroke-linejoin="bevel"/></g>
<g transform="translate(376 926.7) rotate(-90)"><text x="0.0" y="0">0</text></g>
<g transform="translate(376 972.8) rotate(-90)"><path d="M-5.1 -14 L0.5 -18 V0" fill="none" stroke="#333" stroke-width="2.3" stroke-linejoin="bevel"/></g>
<g transform="translate(376 1018.8) rotate(-90)"><text x="0.0" y="0">2</text></g>
<g transform="translate(376 1064.9) rotate(-90)"><text x="0.0" y="0">3</text></g>
<g transform="translate(376 1110.9) rotate(-90)"><text x="0.0" y="0">4</text></g>
<g transform="translate(376 1157.0) rotate(-90)"><text x="0.0" y="0">5</text></g>
<g transform="translate(376 1203.1) rotate(-90)"><text x="0.0" y="0">6</text></g>
<g transform="translate(376 1249.1) rotate(-90)"><text x="0.0" y="0">7</text></g>
<g transform="translate(376 1295.2) rotate(-90)"><text x="0.0" y="0">8</text></g>
<g transform="translate(376 1341.2) rotate(-90)"><text x="0.0" y="0">9</text></g>
</g></svg>
<svg style="left:0;top:0" width="400" height="500"><line x1="362" y1="489.6" x2="372" y2="489.6" stroke="#333" stroke-width="1.5"/></svg>
<!-- slide -->
<div class="a" style="left:535px;top:487px;width:1562.5px;height:880px;background:#fff;border:1px solid #c4c4c4"></div>
<!-- guides -->
<svg style="left:0;top:0" width="2274" height="1426"><g stroke="#8c8c8c" stroke-width="1" stroke-dasharray="3 3"><line x1="1316.5" y1="474" x2="1316.5" y2="1377"/><line x1="390" y1="927.5" x2="2240" y2="927.5"/></g></svg>

<!-- thumbnail -->
<div class="a" style="left:68px;top:463px;width:240px;height:142px;border:6px solid #b7452a;border-radius:12px;background:#b7452a"></div>
<div class="a" style="left:74px;top:469px;width:228px;height:130px;border-radius:7px;background:#fff;box-shadow:inset 0 0 0 1px #d8d8d8"></div>

<!-- status bar -->
<div class="a" style="left:347px;top:1383px;width:1927px;height:1px;background:#c4c4c4"></div>
<div class="a" style="left:2px;top:1386px;width:2272px;height:40px;background:#f3f3f3;border-top:2px solid #c8c6c4"></div>
<div class="a" style="left:1531px;top:1388px;width:80px;height:38px;background:#dcdcdc"></div>
<svg style="left:0;top:0" width="2274" height="1426">
 <g fill="none" stroke="#262626" stroke-width="2">
  <path d="M310 1398 H318.5 C320.5 1398 322 1400 322 1402 V1413 M322 1402 C322 1400 323.5 1398 325.5 1398 H334 V1409 M310 1398 V1420 H319.5"/><path d="M319.7 1416 L326 1421.8 L336.2 1411.7" stroke-width="2.2"/>
  <circle cx="526.9" cy="1399.6" r="3.3" stroke-width="1.8"/>
  <path d="M527 1403.3 C524 1403.3 519 1401 516.5 1400 C514 1399.5 512.8 1402 514.5 1403.5 C516 1405 520 1406 522 1407 V1412 C521 1415 519.5 1418 519 1419.5 C518.5 1421.5 521 1422.5 523.7 1421 M527 1403.3 C530 1403.3 535 1401 537.5 1400 C540 1399.5 541.2 1402 539.5 1403.5 C538 1405 534 1406 532 1407 V1411.5" stroke-width="1.8" stroke-linejoin="round" stroke-linecap="round"/>
  <path d="M527.7 1415.7 L533.9 1421.8 L544.2 1411.7" stroke-width="2"/>
  <path d="M1411.5 1407.7 H1442.5 M1411.5 1415.6 H1442.5 M1411.5 1423.1 H1442.5 M1421 1399.5 L1427.2 1394.3 L1433.5 1399.5"/>
  <rect x="1558.3" y="1398.4" width="26.7" height="22.2"/>
  <path d="M1563.3 1398.4 V1420.6 M1563.3 1414.6 H1585"/>
  <rect x="1570" y="1403.5" width="9" height="5" stroke-width="1.8"/>
  <rect x="1638" y="1398.4" width="10" height="8.6"/><rect x="1654" y="1398.4" width="10" height="8.6"/>
  <rect x="1638" y="1411.8" width="10" height="8.6"/><rect x="1654" y="1411.8" width="10" height="8.6"/>
  <path d="M1730.2 1399 C1726 1396 1721 1395.8 1718 1396 V1419.5 C1722 1419 1726.5 1419.3 1730.2 1421.5 C1734 1419.3 1738.5 1419 1742.5 1419.5 V1396 C1739.5 1395.8 1734.5 1396 1730.2 1399 Z M1730.2 1399 V1421"/>
  <path d="M1721.5 1401 H1727.5 M1721.5 1405.5 H1727.5 M1721.5 1410 H1727.5 M1721.5 1414.5 H1727.5 M1733 1401 H1739 M1733 1405.5 H1739 M1733 1410 H1739 M1733 1414.5 H1739" stroke-width="1.6"/>
  <path d="M1797.5 1396 H1823 M1800 1396 V1410 H1820.5 V1396 M1810.2 1410 V1419.5 M1803 1419.5 H1817.5 M1806 1402 H1814.5"/>
  <path d="M1863 1408.3 H1878 M2099 1408.5 H2114 M2106.5 1401 V1416.2" stroke="#3a3a3a" stroke-width="1.6"/>
  <path d="M1890 1408.5 H2087.7" stroke="#5a5a5a" stroke-width="2"/>
  <path d="M1989 1404 V1414" stroke="#5a5a5a" stroke-width="1.8"/>
  <rect x="2222.5" y="1402.5" width="12" height="12" stroke-width="2.2"/>
  <path d="M2224.5 1398 L2228.5 1394 L2232.5 1398 M2224.5 1418.5 L2228.5 1422.5 L2232.5 1418.5 M2217.5 1404.5 L2213.5 1408.5 L2217.5 1412.5 M2239.5 1404.5 L2243.5 1408.5 L2239.5 1412.5" stroke-width="1.8"/>
 </g>
 <rect x="1943.2" y="1398" width="9.8" height="21.7" fill="#5f5f5f"/>
</svg>

<!-- ANNOTATION -->
<svg style="left:0;top:0" width="2274" height="440">
 <path d="M77.9 182.2 L118.9 189.2 L108.2 200.5 L222.8 306.6 L212.3 317.3 L98.1 211.9 L87.7 222.6 Z" fill="#000"/>
 <circle cx="64.2" cy="165.3" r="16.5" fill="#fff"/>
 <circle cx="64.2" cy="165.3" r="13.8" fill="#000"/>
 <path d="M60.3 161.2 L65.2 158.6 V171.2" fill="none" stroke="#e6e6e6" stroke-width="2.5" stroke-linejoin="bevel"/>
</svg>

<!-- FITTED TEXT -->
<div class="t" style="left:97.7px;top:37.4px;font-size:24.0px;letter-spacing:0.83px;color:#fff">自动保存</div>
<div class="t" style="left:253.7px;top:39.2px;font-size:24.0px;letter-spacing:0.0px;color:#fff">关</div>
<div class="t" style="left:372.7px;top:39.4px;font-size:24.0px;letter-spacing:-0.42px;color:#fff">演示文稿1</div>
<div class="t" style="left:519.1px;top:37.9px;font-size:26.5px;letter-spacing:-0.29px;color:#fff">PowerPoint</div>
<div class="t" style="left:944.5px;top:37.0px;font-size:26.0px;letter-spacing:1.5px;color:#a33112">搜索</div>
<div class="t" style="left:60.7px;top:249.0px;font-size:24.0px;letter-spacing:1.0px;color:#262626">粘贴</div>
<div class="t" style="left:73.0px;top:329.0px;font-size:24.0px;letter-spacing:0.5px;color:#262626">剪贴板</div>
<div class="t" style="left:269.1px;top:247.0px;font-size:24.0px;letter-spacing:1.5px;color:#262626">新建</div>
<div class="t" style="left:246.9px;top:277.8px;font-size:24.0px;letter-spacing:0.4px;color:#262626">幻灯片</div>
<div class="t" style="left:367.6px;top:247.0px;font-size:24.0px;letter-spacing:1.5px;color:#262626">重用</div>
<div class="t" style="left:357.0px;top:277.8px;font-size:24.0px;letter-spacing:0.2px;color:#262626">幻灯片</div>
<div class="t" style="left:344.0px;top:329.0px;font-size:24.0px;letter-spacing:0.2px;color:#262626">幻灯片</div>
<div class="t" style="left:714.6px;top:330.9px;font-size:24.0px;letter-spacing:1.5px;color:#262626">字体</div>
<div class="t" style="left:1123.4px;top:329.6px;font-size:24.0px;letter-spacing:1.1px;color:#262626">段落</div>
<div class="t" style="left:1383.1px;top:248.1px;font-size:24.0px;letter-spacing:1.5px;color:#262626">形状</div>
<div class="t" style="left:1471.9px;top:248.1px;font-size:24.0px;letter-spacing:1.1px;color:#262626">排列</div>
<div class="t" style="left:1547.4px;top:246.7px;font-size:24.0px;letter-spacing:0.13px;color:#b3b3b3">快速样式</div>
<div class="t" style="left:1508.3px;top:328.0px;font-size:24.0px;letter-spacing:1.1px;color:#262626">绘图</div>
<div class="t" style="left:1777.0px;top:243.4px;font-size:24.0px;letter-spacing:1.5px;color:#262626">编辑</div>
<div class="t" style="left:1889.4px;top:249.0px;font-size:24.0px;letter-spacing:0.6px;color:#262626">听写</div>
<div class="t" style="left:2005.9px;top:246.7px;font-size:24.0px;letter-spacing:0.7px;color:#262626">设计</div>
<div class="t" style="left:2003.9px;top:277.1px;font-size:24.0px;letter-spacing:1.5px;color:#262626">灵感</div>
<div class="t" style="left:1888.6px;top:329.2px;font-size:24.0px;letter-spacing:0.7px;color:#262626">语音</div>
<div class="t" style="left:1993.3px;top:329.2px;font-size:24.0px;letter-spacing:0.1px;color:#262626">设计器</div>
<div class="t" style="left:17.6px;top:1398.5px;font-size:24.0px;letter-spacing:0.3px;color:#262626">幻灯片 第 1 张，共 1 张</div>
<div class="t" style="left:371.3px;top:1397.6px;font-size:24.0px;letter-spacing:0.02px;color:#262626">中文(中国)</div>
<div class="t" style="left:550.9px;top:1398.0px;font-size:24.0px;letter-spacing:-0.09px;color:#262626">辅助功能: 一切就绪</div>
<div class="t" style="left:1446.5px;top:1397.4px;font-size:24.0px;letter-spacing:1.5px;color:#262626">备注</div>
<div class="t" style="left:2139.9px;top:1395.6px;font-size:28.0px;letter-spacing:-2.75px;color:#262626">61%</div>
<svg style="left:0;top:0" width="60" height="500"><path d="M30 471.5 L37.5 466.5 V488" fill="none" stroke="#d04a20" stroke-width="2.4" stroke-linejoin="bevel"/></svg>
<div class="t" style="left:497.5px;top:38px;font-size:24px;color:#fff">-</div>
<div class="t" style="left:999.2px;top:36.8px;font-size:27px;letter-spacing:1.6px;color:#a33112">(Alt+Q)</div>
</body></html>
